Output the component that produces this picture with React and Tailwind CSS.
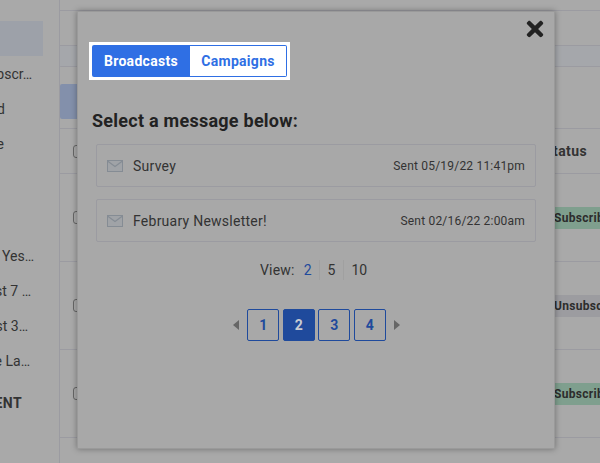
import { FaTimes } from "react-icons/fa";

const sideItems = [
  { text: "Unsubscr…", pr: "pr-[27px]" },
  { text: "Confirmed", pr: "pr-[54px]" },
  { text: "Active", pr: "pr-[55px]" },
];

const sideItems2 = [
  { text: "Opened Yes…", pr: "pr-[25px]" },
  { text: "Last 7 …", pr: "pr-[28px]" },
  { text: "Last 3…", pr: "pr-[31px]" },
  { text: "The La…", pr: "pr-[29px]" },
];

const messages = [
  { name: "Survey", sent: "Sent 05/19/22 11:41pm" },
  { name: "February Newsletter!", sent: "Sent 02/16/22 2:00am" },
];

function Envelope() {
  return (
    <svg width="16" height="12" viewBox="0 0 16 12" className="shrink-0">
      <rect x="0.5" y="0.5" width="15" height="11" fill="#a0a3a7" stroke="#858c94" />
      <path d="M0.5 1 L8 6.5 L15.5 1" fill="none" stroke="#858c94" strokeWidth="1.2" />
    </svg>
  );
}

function Row({ badge, badgeClass }) {
  return (
    <div className="flex h-[88px] items-center border-b border-[#9b9ba1] pl-[13px]">
      <div className="h-[13px] w-[13px] shrink-0 rounded-[3px] border border-[#666]" />
      <div className={`ml-[467px] flex h-[22px] shrink-0 items-center pl-[1px] pr-6 text-xs font-bold tracking-[0.3px] text-[#2c2c2c] ${badgeClass}`}>
        {badge}
      </div>
    </div>
  );
}

function PageButton({ n, active }) {
  return (
    <button
      className={`flex h-8 w-8 items-center justify-center rounded-[2px] border border-[#1f4a9c] text-sm font-bold ${
        active ? "bg-[#1f4a9c] text-[#c8ccd2]" : "text-[#1f4a9c]"
      }`}
    >
      {n}
    </button>
  );
}

export default function App() {
  return (
    <div className="relative flex h-[463px] w-[600px] overflow-hidden bg-[#a9a9a9] font-['Roboto',sans-serif] text-sm text-[#333]">
      {/* sidebar, scrolled off to the left */}
      <aside className="w-[60px] shrink-0 border-r border-[#9b9ba1] pt-[21px]">
        <div className="mr-4 h-[35px] bg-[#9da1a9]" />
        {sideItems.map((item) => (
          <div key={item.text} className={`flex h-[35px] items-center justify-end overflow-hidden whitespace-nowrap ${item.pr}`}>
            {item.text}
          </div>
        ))}
        <div className="h-[77px]" />
        {sideItems2.map((item) => (
          <div key={item.text} className={`flex h-[35px] items-center justify-end overflow-hidden whitespace-nowrap ${item.pr}`}>
            {item.text}
          </div>
        ))}
        <div className="flex h-[49px] items-center justify-end pr-[37px] font-bold tracking-[0.4px]">ENT</div>
      </aside>

      <main className="min-w-0 flex-1 overflow-hidden">
        <div className="-ml-px h-[67px] rounded-bl-[3px] border-b border-l border-[#9b9ba1] pt-[10px]">
          <div className="h-[36px] border-y border-[#9b9ba1]" />
          <div className="h-[20px] bg-[#a5a7ab]" />
        </div>
        <div className="mt-[17px] h-[35px] w-32 rounded-[2px] bg-[#8390ab]" />
        <div className="mt-[9px]">
          <div className="flex h-[46px] items-center border-y border-[#9b9ba1] pl-[13px]">
            <div className="h-[13px] w-[13px] shrink-0 rounded-[3px] border border-[#666]" />
            <div className="ml-[458px] shrink-0 font-bold tracking-[0.4px]">Status</div>
          </div>
          <Row badge="Subscribed" badgeClass="bg-[#7f9f8e]" />
          <Row badge="Unsubscribed" badgeClass="bg-[#9c9ca0]" />
          <Row badge="Subscribed" badgeClass="bg-[#7f9f8e]" />
        </div>
      </main>

      {/* modal */}
      <div className="absolute left-[77px] top-[11px] h-[438px] w-[478px] border border-[#9a9a9a] bg-[#a8a8a8] pl-[11px] pr-3 shadow-[0_0_6px_rgba(0,0,0,0.35)]">
        <button className="absolute right-[7px] top-[5px] text-[#222]">
          <FaTimes size={24} />
        </button>

        <div className="mt-[30px] inline-flex border-[3px] border-white bg-white">
          <div className="flex h-8 w-[98px] items-center justify-center rounded-l-[2px] bg-[#2f6fe4] font-bold tracking-[0.3px] text-white">
            Broadcasts
          </div>
          <div className="flex h-8 w-[97px] items-center justify-center rounded-r-[2px] border border-l-0 border-[#2f6fe4] font-bold tracking-[0.3px] text-[#2f6fe4]">
            Campaigns
          </div>
        </div>

        <h2 className="ml-[3px] mt-[28px] text-lg font-bold leading-[26px] tracking-[0.25px] text-[#222]">
          Select a message below:
        </h2>

        <div className="ml-[7px] mt-[10px] flex w-[440px] flex-col gap-3">
          {messages.map((m) => (
            <div key={m.name} className="flex h-[43px] items-center rounded-[2px] border border-[#9b9ba1] pl-[10px] pr-[10px]">
              <Envelope />
              <span className="ml-[10px] tracking-[0.25px]">{m.name}</span>
              <span className="ml-auto text-xs tracking-[0.2px]">{m.sent}</span>
            </div>
          ))}
        </div>

        <div className="ml-[171px] mt-[18px] flex items-center leading-5">
          <span className="tracking-[0.2px]">View:</span>
          <span className="ml-[9px] pr-[7px] text-[#1f4a9c]">2</span>
          <span className="border-l border-[#a0a0a0] px-[8px]">5</span>
          <span className="border-l border-[#a0a0a0] pl-[7px]">10</span>
        </div>

        <div className="mt-[29px] flex items-center justify-center gap-[3.5px] pl-[2px]">
          <svg width="6" height="10" viewBox="0 0 6 10" className="mr-[5px]">
            <path d="M6 0 L0 5 L6 10 Z" fill="#666" />
          </svg>
          <PageButton n={1} />
          <PageButton n={2} active />
          <PageButton n={3} />
          <PageButton n={4} />
          <svg width="6" height="10" viewBox="0 0 6 10" className="ml-[5px]">
            <path d="M0 0 L6 5 L0 10 Z" fill="#666" />
          </svg>
        </div>
      </div>
    </div>
  );
}
